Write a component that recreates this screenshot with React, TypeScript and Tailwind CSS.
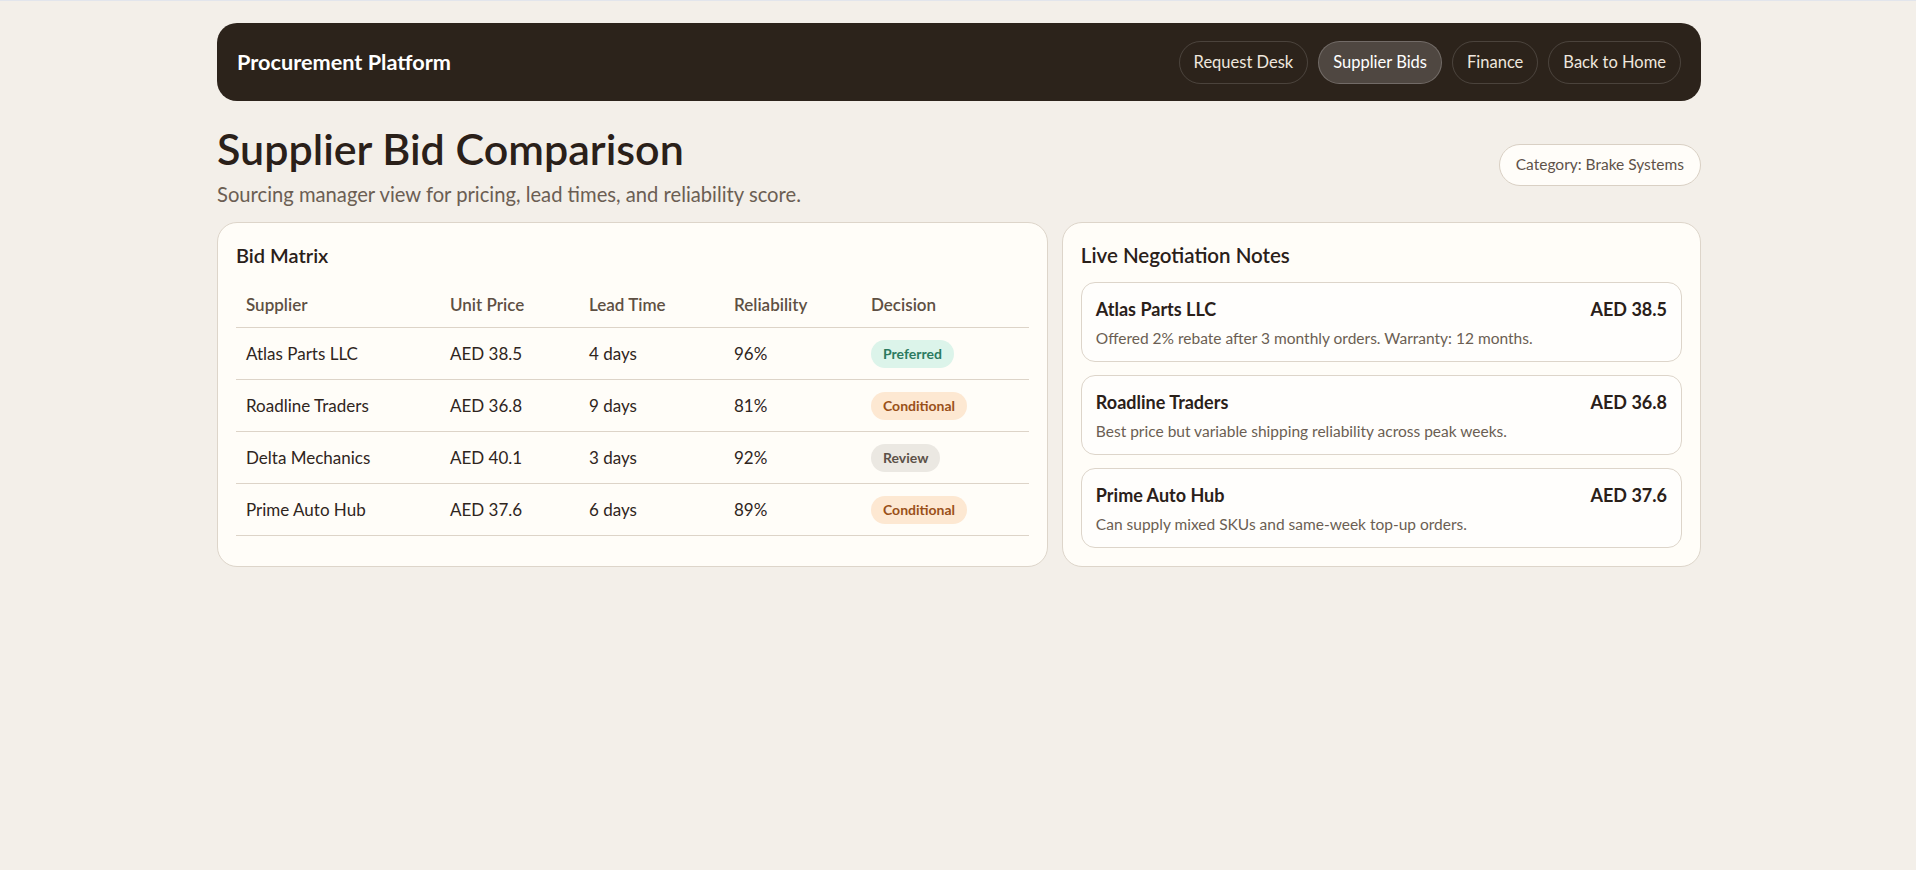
import React from "react";

const bids = [
  { supplier: "Atlas Parts LLC", price: "AED 38.5", lead: "4 days", reliability: "96%", decision: "Preferred" },
  { supplier: "Roadline Traders", price: "AED 36.8", lead: "9 days", reliability: "81%", decision: "Conditional" },
  { supplier: "Delta Mechanics", price: "AED 40.1", lead: "3 days", reliability: "92%", decision: "Review" },
  { supplier: "Prime Auto Hub", price: "AED 37.6", lead: "6 days", reliability: "89%", decision: "Conditional" },
];

const notes = [
  { supplier: "Atlas Parts LLC", price: "AED 38.5", text: "Offered 2% rebate after 3 monthly orders. Warranty: 12 months." },
  { supplier: "Roadline Traders", price: "AED 36.8", text: "Best price but variable shipping reliability across peak weeks." },
  { supplier: "Prime Auto Hub", price: "AED 37.6", text: "Can supply mixed SKUs and same-week top-up orders." },
];

const badgeStyles: Record<string, string> = {
  Preferred: "bg-[#dcf4ea] text-[#2b7a5f]",
  Conditional: "bg-[#fde8d2] text-[#9a5019]",
  Review: "bg-[#ebe8e2] text-[#5c5148]",
};

const navItems = ["Request Desk", "Supplier Bids", "Finance", "Back to Home"];

const cols = "grid grid-cols-[204px_139px_145px_137px_1fr]";

export default function App() {
  return (
    <div className="min-h-screen border-t border-[#e2e5ec] bg-[#f3efe9] font-['Lato','Noto_Sans',sans-serif] text-[#2a2019]">
      <div className="mx-auto max-w-[1486px] pt-[22px] pb-10 pl-[2px]">
        <header className="flex h-[78px] items-center justify-between rounded-[20px] bg-[#2c231b] px-5">
          <div className="text-[21.7px] font-bold text-white">Procurement Platform</div>
          <nav className="flex gap-[10px]">
            {navItems.map((item) => (
              <a
                key={item}
                href="#"
                className={
                  item === "Supplier Bids"
                    ? "flex h-[43px] items-center rounded-full border border-white/20 bg-[#4f4741] px-[14px] text-[16.5px] text-white"
                    : "flex h-[43px] items-center rounded-full border border-white/15 px-[14px] text-[16.5px] text-[#efe7de]"
                }
              >
                {item}
              </a>
            ))}
          </nav>
        </header>

        <section className="mt-[25px] flex items-center justify-between">
          <div>
            <h1 className="text-[43px] leading-[1.05] font-semibold">Supplier Bid Comparison</h1>
            <p className="mt-[9px] text-[20.2px] leading-[28px] text-[#6b5e53]">
              Sourcing manager view for pricing, lead times, and reliability score.
            </p>
          </div>
          <span className="mb-[5px] flex h-[42px] items-center rounded-full border border-[#d9d0c4] bg-[#fffdf9] px-4 text-[15.5px] text-[#5e5249]">
            Category: Brake Systems
          </span>
        </section>

        <div className="mt-[14px] grid grid-cols-[1.3fr_1fr] gap-[14px]">
          <div className="rounded-[20px] border border-[#ddd5ca] bg-[#fffdf8] p-[18px]">
            <h2 className="text-[20px] leading-[28px] font-semibold">Bid Matrix</h2>
            <div className="mt-[10px]">
              <div className={`${cols} border-b border-[#ddd4c8] pt-[14px] pb-[10px] text-[17px] leading-6 font-semibold text-[#5e5043]`}>
                <div className="pl-[10px]">Supplier</div>
                <div className="pl-[10px]">Unit Price</div>
                <div className="pl-[10px]">Lead Time</div>
                <div className="pl-[10px]">Reliability</div>
                <div className="pl-[10px]">Decision</div>
              </div>
              {bids.map((b) => (
                <div key={b.supplier} className={`${cols} h-[52px] items-center border-b border-[#ddd4c8] text-[17px] leading-6 text-[#2f251d]`}>
                  <div className="pl-[10px]">{b.supplier}</div>
                  <div className="pl-[10px]">{b.price}</div>
                  <div className="pl-[10px]">{b.lead}</div>
                  <div className="pl-[10px]">{b.reliability}</div>
                  <div className="pl-[10px]">
                    <span className={`inline-flex h-[28px] items-center rounded-full px-[12px] text-[14px] font-bold ${badgeStyles[b.decision]}`}>
                      {b.decision}
                    </span>
                  </div>
                </div>
              ))}
            </div>
          </div>

          <div className="rounded-[20px] border border-[#ddd5ca] bg-[#fffdf8] p-[18px]">
            <h2 className="text-[20.5px] leading-[28px] font-semibold">Live Negotiation Notes</h2>
            <div className="mt-[13px] flex flex-col gap-[13px]">
              {notes.map((n) => (
                <div key={n.supplier} className="rounded-[14px] border border-[#ddd5ca] bg-[#fffefc] px-[14px] pt-[14px] pb-[12px]">
                  <div className="flex items-center justify-between text-[18px] leading-6 font-bold">
                    <span>{n.supplier}</span>
                    <span>{n.price}</span>
                  </div>
                  <p className="mt-[6px] text-[15.5px] leading-[22px] text-[#6b5e53]">{n.text}</p>
                </div>
              ))}
            </div>
          </div>
        </div>
      </div>
    </div>
  );
}
